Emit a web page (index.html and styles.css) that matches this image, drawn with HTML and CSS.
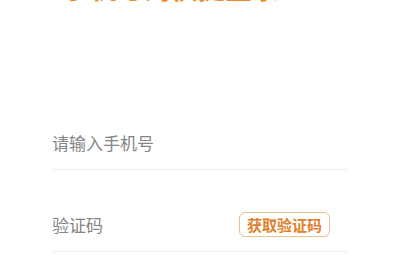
FILE: index.html
```html
<!DOCTYPE html>
<html lang="zh-CN">
<head>
    <meta charset="UTF-8">
    <meta name="viewport" content="width=device-width, initial-scale=1.0">
    <title>手机号快捷登录</title>
    <link rel="stylesheet" href="styles.css">
</head>
<body>
    <div class="page">
        <h1 class="title">手机号码快捷登录</h1>

        <div class="form">
            <div class="field">
                <input class="field-input" type="tel" placeholder="请输入手机号">
            </div>
            <div class="field">
                <input class="field-input" type="text" placeholder="验证码">
                <button class="code-btn">获取验证码</button>
            </div>
        </div>
    </div>
</body>
</html>
```

FILE: styles.css
```css
body {
    margin: 0;
    background: #fff;
    font-family: 'Noto Sans CJK SC', 'Noto Sans', sans-serif;
    overflow: hidden;
}

.page {
    width: 400px;
}

.title {
    margin: -27px 0 0;
    padding-left: 63px;
    height: 30px;
    font-size: 27px;
    line-height: 30px;
    font-weight: bold;
    color: #ee8a2c;
}

.form {
    padding: 85px 52px 0;
}

.field {
    display: flex;
    align-items: center;
    box-sizing: border-box;
    height: 51px;
    padding-bottom: 4px;
    margin-top: 31px;
    border-bottom: 1px solid #eeeeee;
}

.field-input {
    flex: 1;
    min-width: 0;
    border: none;
    outline: none;
    padding: 0;
    font-family: inherit;
    font-size: 17px;
    color: #333;
    background: transparent;
}

.field-input::placeholder {
    color: #858585;
}

.code-btn {
    margin-right: 18px;
    padding: 0 7px;
    height: 25px;
    border: 1px solid #ecc08f;
    border-radius: 6px;
    background: #fff;
    font-family: inherit;
    font-size: 15px;
    font-weight: bold;
    line-height: 23px;
    color: #e0802a;
}
```
